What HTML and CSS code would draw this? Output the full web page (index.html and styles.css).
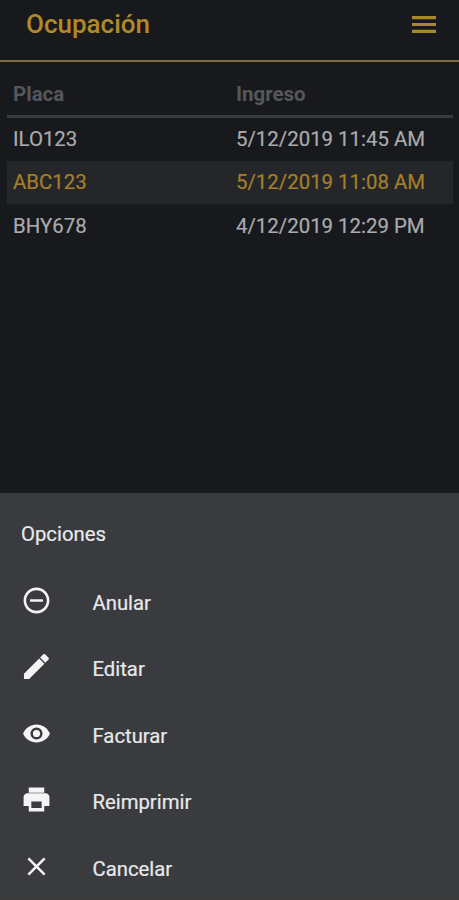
FILE: index.html
```html
<!DOCTYPE html>
<html lang="es">
<head>
<meta charset="utf-8">
<title>Ocupación</title>
<link rel="stylesheet" href="styles.css">
</head>
<body>
<div class="app">
  <header class="bar">
    <h1 class="title"><span>Ocupación</span></h1>
    <svg class="menu" viewBox="0 0 24 17"><path d="M0 0h24v3.2H0zM0 6.900h24v3.200H0zM0 13.800h24V17H0z"/></svg>
  </header>
  <main class="list">
    <div class="row head"><span>Placa</span><span>Ingreso</span></div>
    <div class="row"><span>ILO123</span><span>5/12/2019 11:45 AM</span></div>
    <div class="row selected"><span>ABC123</span><span>5/12/2019 11:08 AM</span></div>
    <div class="row"><span>BHY678</span><span>4/12/2019 12:29 PM</span></div>
  </main>
  <section class="sheet">
    <h2 class="sheet-title">Opciones</h2>
    <div class="option"><svg class="icon" viewBox="0 0 24 24"><path d="M7 11v2h10v-2H7zm5-9C6.480 2 2 6.480 2 12s4.480 10 10 10 10-4.480 10-10S17.520 2 12 2zm0 18c-4.410 0-8-3.590-8-8s3.590-8 8-8 8 3.590 8 8-3.590 8-8 8z"/></svg><span>Anular</span></div>
    <div class="option"><svg class="icon" viewBox="0 0 24 24"><path d="M2.300 17.600v4h4L18.100 9.800l-4-4zM21.300 6.600c.4-.4.4-1 0-1.400l-2.600-2.600c-.4-.4-1-.4-1.400 0l-2.500 2.500 4 4z"/></svg><span>Editar</span></div>
    <div class="option"><svg class="icon" viewBox="0 0 24 24"><path d="M12 5C7.450 5 3.200 7.900 1.600 12c1.600 4.100 5.850 7 10.400 7s8.800-2.900 10.400-7C20.800 7.900 16.550 5 12 5zm0 11.700a4.700 4.700 0 1 1 0-9.400 4.700 4.700 0 0 1 0 9.400zm0-7.500a2.800 2.800 0 1 0 0 5.600 2.800 2.800 0 0 0 0-5.600z"/></svg><span>Facturar</span></div>
    <div class="option"><svg class="icon" viewBox="0 0 24 24"><path d="M19 7.100H5c-1.660 0-3 1.340-3 3V17h4v4.200h12V17h4v-6.900c0-1.660-1.340-3-3-3zM16 18.500H8v-5h8v5zM18 2.700H6v4h12v-4z"/></svg><span>Reimprimir</span></div>
    <div class="option"><svg class="icon" viewBox="0 0 24 24"><path d="M19 6.410 17.590 5 12 10.590 6.410 5 5 6.410 10.590 12 5 17.590 6.410 19 12 13.410 17.590 19 19 17.590 13.410 12z"/></svg><span>Cancelar</span></div>
  </section>
</div>
</body>
</html>
```
FILE: styles.css
```css
* { box-sizing: border-box; }
body { margin: 0; background: #18191d; font-family: Roboto, "Liberation Sans", sans-serif; }
.app { height: 900px; display: flex; flex-direction: column; overflow: hidden; }
.bar {
  height: 62px; padding: 0 23px 12px 26px; border-bottom: 2px solid #7d693a;
  display: flex; align-items: center; justify-content: space-between;
}
.title { margin: 0; font-size: 26px; line-height: 30px; font-weight: 500; color: #b0892b; }
.menu { width: 24px; height: 17px; fill: #a88733; }
.list { flex: 1; padding: 10px 6px 0 7px; }
.row {
  display: grid; grid-template-columns: 223px 1fr; align-items: center;
  height: 43.500px; padding: 0 6px; font-size: 20.400px; color: #aaabad;
  -webkit-text-stroke: 0.2px currentColor;
}
.head { height: 46px; border-bottom: 3px solid #3a3b3f; font-weight: 700; font-size: 20.500px; color: #56575a; margin-bottom: -1px; -webkit-text-stroke: 0; }
.selected { background: #25262a; color: #a58028; }
.sheet {
  height: 407.500px; padding: 8px 21px 0; background: #3a3b3f; color: #e9e9ea;
  border-bottom: 1px solid #40383b; -webkit-text-stroke: 0.2px currentColor;
}
.sheet-title { margin: 0 0 1px; height: 65.500px; line-height: 67px; font-size: 20.300px; font-weight: 400; }
.option { height: 66.500px; display: flex; align-items: center; font-size: 20.300px; }
.option span { margin-left: 41px; padding-top: 5px; }
.icon { width: 31px; height: 31px; margin-left: -0.500px; fill: #f4f4f5; -webkit-text-stroke: 0; }
```
